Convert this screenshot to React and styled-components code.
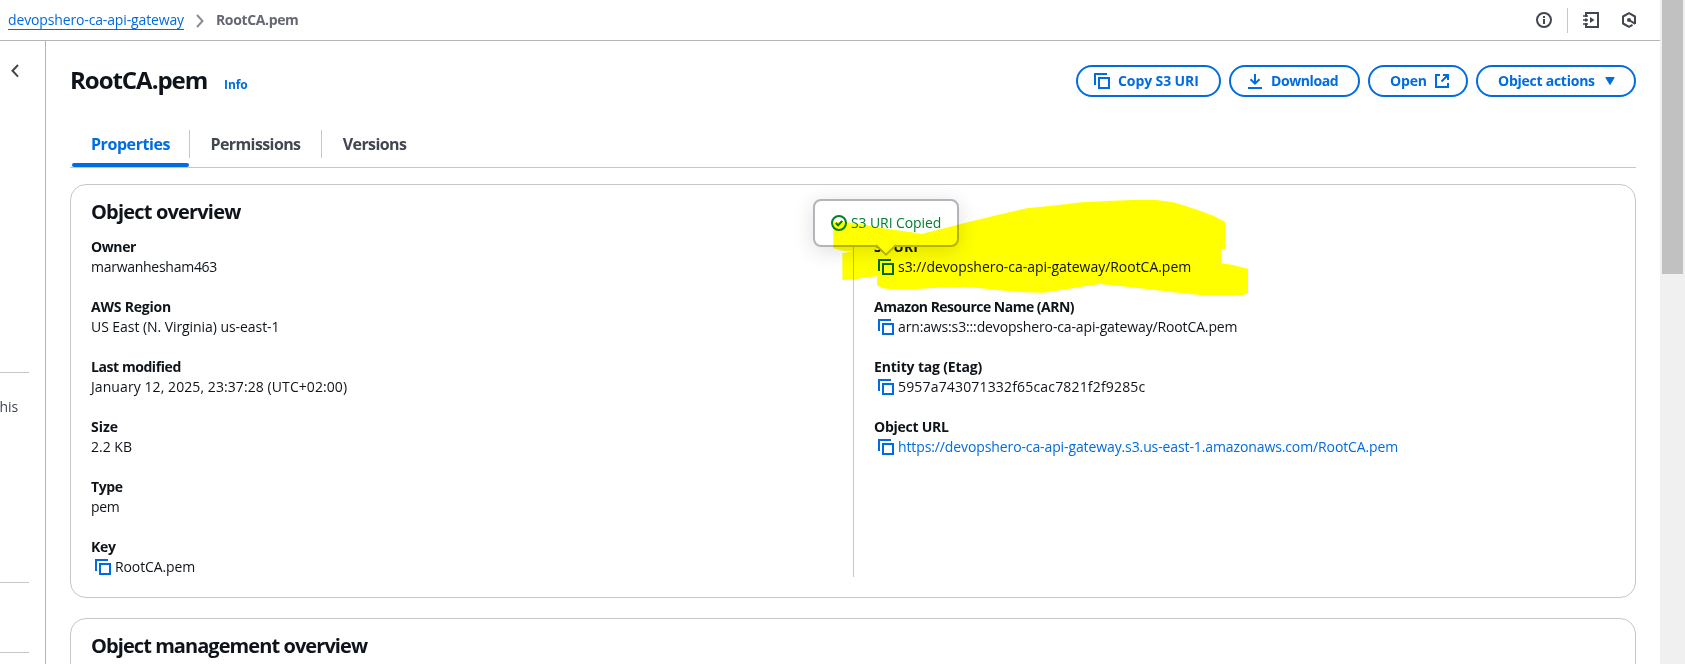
import React from "react";
import styled, { createGlobalStyle, css } from "styled-components";

const c = {
  blue: "#006ce0",
  ink: "#0f141a",
  body: "#0f141a",
  muted: "#656871",
  dark: "#424650",
  line: "#b4b4bb",
  soft: "#c6c6cd",
  green: "#00802f",
};

const Global = createGlobalStyle`
  *, *::before, *::after { box-sizing: border-box; }
  body {
    margin: 0;
    overflow: hidden;
    background: #fff;
    color: ${c.body};
    font: 400 14px/20px "Open Sans", "Noto Sans", sans-serif;
  }
  svg { display: block; flex: none; }
`;

const tracking = css`
  letter-spacing: ${(p) => p.$track || 0}px;
  white-space: nowrap;
`;

const Page = styled.div`
  position: relative;
  display: flex;
  width: 1685px;
  height: 664px;
  overflow: hidden;
`;

const Window = styled.div`
  display: flex;
  flex-direction: column;
  width: 1660px;
`;

const TopBar = styled.header`
  display: flex;
  align-items: center;
  justify-content: space-between;
  height: 41px;
  padding: 0 23px 0 8px;
  border-bottom: 1px solid ${c.line};
`;

const Breadcrumbs = styled.nav`
  display: flex;
  align-items: center;
  svg { margin: 1px 12px 0 12px; }
`;

const CrumbLink = styled.a`
  height: 20px;
  color: ${c.blue};
  border-bottom: 1px solid ${c.blue};
  ${tracking}
`;

const CrumbCurrent = styled.span`
  color: ${c.muted};
  font-weight: 700;
  ${tracking}
`;

const Tools = styled.div`
  display: flex;
  align-items: center;
  height: 40px;
`;

const ToolDivider = styled.span`
  width: 1px;
  height: 25px;
  margin: 0 15px;
  background: ${c.soft};
`;

const ToolGap = styled.span`
  width: 22px;
`;

const Body = styled.div`
  display: flex;
  flex: 1;
  min-height: 0;
`;

const SideRail = styled.aside`
  display: flex;
  flex-direction: column;
  width: 46px;
  border-right: 1px solid ${c.line};
`;

const Collapse = styled.button`
  display: flex;
  height: 331px;
  padding: 23px 0 0 11px;
  border: 0;
  background: none;
`;

const RailRule = styled.hr`
  width: 29px;
  height: 1px;
  margin: 0;
  border: 0;
  background: ${c.soft};
`;

const RailSection = styled.div`
  height: ${(p) => p.$height}px;
  padding-top: 24px;
  overflow: hidden;
  color: ${c.dark};
  text-indent: -0.5px;
  ${tracking}
`;

const Content = styled.main`
  flex: 1;
  padding: 24px 24px 0;
`;

const TitleRow = styled.div`
  display: flex;
  align-items: flex-start;
  justify-content: space-between;
  height: 59px;
`;

const TitleGroup = styled.div`
  display: flex;
  align-items: baseline;
`;

const Title = styled.h1`
  width: 154px;
  margin: 0;
  color: ${c.ink};
  font-size: 24px;
  font-weight: 700;
  line-height: 30px;
  ${tracking}
`;

const InfoLink = styled.a`
  color: ${c.blue};
  font-size: 12px;
  font-weight: 700;
  ${tracking}
`;

const Actions = styled.div`
  display: flex;
  gap: 8px;
`;

const Button = styled.button`
  display: flex;
  align-items: center;
  gap: ${(p) => (p.$lead ? 8 : 7.5)}px;
  width: ${(p) => p.$width}px;
  height: 32px;
  padding: 0 0 0 ${(p) => (p.$lead ? 16 : 20)}px;
  border: 2px solid ${c.blue};
  border-radius: 16px;
  background: #fff;
  color: ${c.blue};
  font: 700 14px/20px "Open Sans", "Noto Sans", sans-serif;
  ${tracking}
`;

const Tabs = styled.div`
  display: flex;
  height: 44px;
  padding: 6px 0 0 2px;
  border-bottom: 1px solid ${c.soft};
`;

const Tab = styled.button`
  display: flex;
  flex-direction: column;
  justify-content: space-between;
  align-items: center;
  width: ${(p) => p.$width}px;
  height: 37px;
  padding: 2px 0 0;
  border: 0;
  background: none;
  color: ${(p) => (p.$active ? c.blue : c.dark)};
  font: 700 16px/24px "Open Sans", "Noto Sans", sans-serif;
  ${tracking}
  &::after {
    content: "";
    width: 100%;
    height: 4px;
    border-radius: 4px;
    background: ${(p) => (p.$active ? c.blue : "transparent")};
  }
`;

const TabDivider = styled.span`
  width: 1px;
  height: 28px;
  background: ${c.soft};
`;

const Card = styled.section`
  height: ${(p) => p.$height}px;
  margin-top: ${(p) => p.$gap}px;
  padding: 15px 20px 20px;
  border: 1px solid ${c.soft};
  border-radius: 16px;
`;

const CardTitle = styled.h2`
  margin: 0 0 13px;
  color: ${c.ink};
  font-size: 20px;
  font-weight: 700;
  line-height: 24px;
  ${tracking}
`;

const Columns = styled.div`
  display: grid;
  grid-template-columns: 762px 1fr;
`;

const Column = styled.div`
  display: flex;
  flex-direction: column;
  gap: 20px;
  ${(p) => p.$ruled && css`
    padding-left: 20px;
    border-left: 1px solid ${c.soft};
  `}
`;

const Label = styled.div`
  height: 20px;
  font-weight: 700;
  ${tracking}
`;

const Value = styled.div`
  display: flex;
  align-items: center;
  gap: 4px;
  height: 20px;
  padding-left: ${(p) => (p.$copy ? 4 : 0)}px;
  color: ${(p) => (p.$link ? c.blue : c.body)};
  ${tracking}
`;

const CopyButton = styled.span`
  position: relative;
  height: 16px;
  color: ${c.blue};
`;

const Popover = styled.div`
  position: absolute;
  left: -65px;
  top: -60px;
  display: flex;
  align-items: center;
  gap: 4px;
  width: 146px;
  height: 48px;
  padding: 0 0 1px 16px;
  border: 2px solid ${c.line};
  border-radius: 8px;
  background: #fff;
  box-shadow: 0 4px 20px 1px rgba(0, 7, 22, 0.12);
  color: ${c.green};
  ${tracking}
`;

const PopoverArrow = styled.svg`
  position: absolute;
  left: 61px;
  top: 44px;
  overflow: visible;
`;

const Marker = styled.svg`
  position: absolute;
  left: 780px;
  top: 180px;
  mix-blend-mode: multiply;
  pointer-events: none;
`;

const ScrollTrack = styled.div`
  width: 25px;
  padding: 0 2px;
  background: #f0f0f0;
`;

const ScrollThumb = styled.div`
  height: 274px;
  background: #c1c1c1;
`;

const CopyIcon = () => (
  <svg width="16" height="16" fill="none" stroke="currentColor" strokeWidth="2">
    <path d="M1 12V1h12" />
    <path d="M5 5h10v10H5z" />
  </svg>
);

const DownloadIcon = () => (
  <svg width="16" height="16" fill="none" stroke="currentColor" strokeWidth="2">
    <path d="M8 1v9.5M3.5 6.2 8 10.7l4.500-4.500M1 15h14" />
  </svg>
);

const ExternalIcon = () => (
  <svg width="16" height="16" fill="none" stroke="currentColor" strokeWidth="2">
    <path d="M6 2H2v12h12v-4M9 2h5v5M14 2 7.500 8.500" />
  </svg>
);

const CaretIcon = () => (
  <svg width="16" height="16" fill="currentColor" stroke="currentColor" strokeLinejoin="round">
    <path d="M3.800 4.500h8.400L8 11.500z" />
  </svg>
);

const CheckIcon = () => (
  <svg width="16" height="16" fill="none" stroke="currentColor" strokeWidth="2">
    <circle cx="8" cy="8" r="7" />
    <path d="m4.800 8 2.300 2.300 4.200-4.400" />
  </svg>
);

const InfoIcon = () => (
  <svg width="16" height="16" fill="none" stroke={c.dark} strokeWidth="2">
    <circle cx="8" cy="8" r="7" />
    <path d="M8 4v2M8 7v5" />
  </svg>
);

const NotebookIcon = () => (
  <svg width="16" height="16" fill="none" stroke={c.dark} strokeWidth="2">
    <path d="M3 5V1h12v14H3v-4M3 6.500v3" />
    <path d="M0 4h5M0 8h5M0 12h5" strokeWidth="1.600" />
    <path d="M7 5v6l4.500-3z" fill={c.dark} stroke="none" />
  </svg>
);

const HexIcon = () => (
  <svg width="16" height="16" fill="none" stroke={c.dark} strokeWidth="2" strokeLinejoin="round">
    <path d="M14 12V4.500L8 1.200 2 4.500v7l6 3.300 3.500-1.900" />
    <circle cx="8" cy="8" r="2" fill={c.dark} stroke="none" />
    <path d="m8 8 6.300 3.800" />
  </svg>
);

const ChevronLeft = () => (
  <svg width="8" height="14" fill="none" stroke={c.dark} strokeWidth="2">
    <path d="M7 1 1.500 6.800 7 12.600" />
  </svg>
);

const ChevronRight = () => (
  <svg width="8" height="14" fill="none" stroke="#8c8c94" strokeWidth="2">
    <path d="m1 1 5.500 6L1 13" />
  </svg>
);

const left = [
  { label: "Owner", lt: -0.4, value: "marwanhesham463", vt: -0.27 },
  { label: "AWS Region", lt: -0.22, value: "US East (N. Virginia) us-east-1", vt: -0.06 },
  { label: "Last modified", lt: -0.43, value: "January 12, 2025, 23:37:28 (UTC+02:00)", vt: 0.08 },
  { label: "Size", lt: 0, value: "2.2 KB", vt: 0 },
  { label: "Type", lt: -0.4, value: "pem", vt: -0.4 },
  { label: "Key", lt: -0.3, value: "RootCA.pem", vt: -0.1, copy: true },
];

const right = [
  { label: "S3 URI", lt: 0, value: "s3://devopshero-ca-api-gateway/RootCA.pem", vt: -0.03, copy: true, copied: true },
  { label: "Amazon Resource Name (ARN)", lt: -0.51, value: "arn:aws:s3:::devopshero-ca-api-gateway/RootCA.pem", vt: -0.14, copy: true },
  { label: "Entity tag (Etag)", lt: -0.17, value: "5957a743071332f65cac7821f2f9285c", vt: 0.17, copy: true },
  { label: "Object URL", lt: -0.24, value: "https://devopshero-ca-api-gateway.s3.us-east-1.amazonaws.com/RootCA.pem", vt: -0.11, copy: true, link: true },
];

const Field = ({ label, lt, value, vt, copy, link, copied }) => (
  <div>
    <Label $track={lt}>{label}</Label>
    <Value $track={vt} $copy={copy} $link={link}>
      {copy && (
        <CopyButton>
          <CopyIcon />
          {copied && (
            <Popover $track={-0.1}>
              <CheckIcon />
              <span>S3 URI Copied</span>
              <PopoverArrow width="20" height="11">
                <path d="M0 0 10 9.500 20 0" fill="#fff" stroke={c.line} strokeWidth="2" />
                <path d="M1.500 -1h17v1L10 8 1.500 0z" fill="#fff" />
              </PopoverArrow>
            </Popover>
          )}
        </CopyButton>
      )}
      <span>{value}</span>
    </Value>
  </div>
);

export default function App() {
  return (
    <Page>
      <Global />
      <Window>
        <TopBar>
          <Breadcrumbs>
            <CrumbLink $track={-0.14}>devopshero-ca-api-gateway</CrumbLink>
            <ChevronRight />
            <CrumbCurrent $track={-0.36}>RootCA.pem</CrumbCurrent>
          </Breadcrumbs>
          <Tools>
            <InfoIcon />
            <ToolDivider />
            <NotebookIcon />
            <ToolGap />
            <HexIcon />
          </Tools>
        </TopBar>
        <Body>
          <SideRail>
            <Collapse aria-label="Collapse">
              <ChevronLeft />
            </Collapse>
            <RailRule />
            <RailSection $height={209}>his</RailSection>
            <RailRule />
            <RailSection $height={69} />
            <RailRule />
          </SideRail>
          <Content>
            <TitleRow>
              <TitleGroup>
                <Title $track={-1.03}>RootCA.pem</Title>
                <InfoLink $track={-0.05}>Info</InfoLink>
              </TitleGroup>
              <Actions>
                <Button $width={145} $lead $track={-0.1}>
                  <CopyIcon />
                  Copy S3 URI
                </Button>
                <Button $width={131} $lead $track={-0.42}>
                  <DownloadIcon />
                  Download
                </Button>
                <Button $width={100} $track={-0.15}>
                  Open
                  <ExternalIcon />
                </Button>
                <Button $width={160} $track={-0.25}>
                  Object actions
                  <CaretIcon />
                </Button>
              </Actions>
            </TitleRow>
            <Tabs>
              <Tab $width={117} $active $track={-0.42}>Properties</Tab>
              <TabDivider />
              <Tab $width={131} $track={-0.6}>Permissions</Tab>
              <TabDivider />
              <Tab $width={105} $track={-0.6}>Versions</Tab>
            </Tabs>
            <Card $height={414} $gap={16}>
              <CardTitle $track={-0.82}>Object overview</CardTitle>
              <Columns>
                <Column>{left.map((f) => <Field key={f.label} {...f} />)}</Column>
                <Column $ruled>{right.map((f) => <Field key={f.label} {...f} />)}</Column>
              </Columns>
            </Card>
            <Card $height={300} $gap={20}>
              <CardTitle $track={-0.93}>Object management overview</CardTitle>
            </Card>
          </Content>
        </Body>
      </Window>
      <ScrollTrack>
        <ScrollThumb />
      </ScrollTrack>
      <Marker width="500" height="160" viewBox="0 0 1500 480">
        <path
          fill="#ff0"
          d="M160 125V205L182 211 200 214H220L205 217 187 220V299H222L250 293 291 289V316L305 324 330 328H400L470 323 510 321 590 323 650 330 730 337 790 338 850 329 900 321 960 312 1040 320 1120 329 1180 337 1260 345H1390L1404 340V266L1385 262 1355 254 1324 250V208L1335 206V125L1300 107 1260 92 1215 77 1180 67 1130 60H1060L1000 62 905 67 830 76 740 85 640 108 590 120 530 135 480 148 425 162 395 157 350 151 300 143 245 133 200 127z"
        />
      </Marker>
    </Page>
  );
}
